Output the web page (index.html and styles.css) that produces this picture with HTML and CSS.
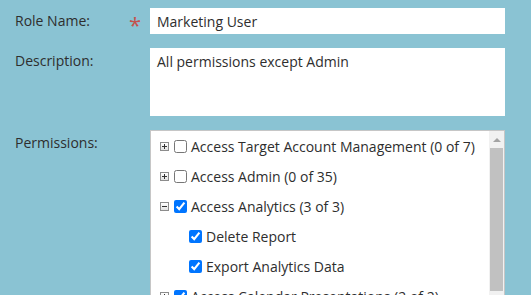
FILE: index.html
```html
<!DOCTYPE html>
<html lang="en">
<head>
    <meta charset="UTF-8">
    <meta name="viewport" content="width=device-width, initial-scale=1.0">
    <title>Role Settings</title>
    <link rel="stylesheet" href="styles.css">
</head>
<body>
    <div class="role-form">
        <!-- role name -->
        <label class="form-label" for="roleName">Role Name:<span class="required">*</span></label>
        <input class="text-input" type="text" id="roleName" value="Marketing User">

        <!-- description -->
        <label class="form-label" for="roleDesc">Description:</label>
        <textarea class="text-area" id="roleDesc">All permissions except Admin</textarea>

        <!-- permissions tree -->
        <label class="form-label">Permissions:</label>
        <div class="tree-box">
            <ul class="tree-list">
                <li class="tree-row">
                    <span class="expander plus"></span>
                    <input type="checkbox">
                    <span class="tree-text">Access Target Account Management (0 of 7)</span>
                </li>
                <li class="tree-row">
                    <span class="expander plus"></span>
                    <input type="checkbox">
                    <span class="tree-text">Access Admin (0 of 35)</span>
                </li>
                <li class="tree-row">
                    <span class="expander minus"></span>
                    <input type="checkbox" checked>
                    <span class="tree-text">Access Analytics (3 of 3)</span>
                </li>
                <li class="tree-row child">
                    <input type="checkbox" checked>
                    <span class="tree-text">Delete Report</span>
                </li>
                <li class="tree-row child">
                    <input type="checkbox" checked>
                    <span class="tree-text">Export Analytics Data</span>
                </li>
                <li class="tree-row">
                    <span class="expander plus"></span>
                    <input type="checkbox" checked>
                    <span class="tree-text">Access Calendar Presentations (2 of 2)</span>
                </li>
            </ul>
            <div class="scrollbar">
                <div class="scroll-arrow"></div>
                <div class="scroll-thumb"></div>
            </div>
        </div>
    </div>
</body>
</html>
```

FILE: styles.css
```css
html {
    overflow: hidden;
}

body {
    margin: 0;
    padding: 8px 0 0 15px;
    background-color: #8ac3d3;
    font-family: "Open Sans", "Liberation Sans", sans-serif;
    font-size: 14px;
    color: #2e2e2e;
}

.role-form {
    display: grid;
    grid-template-columns: 135px 355px;
    row-gap: 14px;
}

.form-label {
    display: flex;
    justify-content: space-between;
    align-items: flex-start;
    padding-top: 3px;
    line-height: 19px;
}

.required {
    color: #c4514c;
    font-size: 22px;
    line-height: 19px;
    padding-top: 4px;
    margin-right: 9px;
}

.text-input,
.text-area {
    border: none;
    margin: 0;
    background: white;
    font-family: inherit;
    font-size: 14px;
    color: #2e2e2e;
    line-height: 19px;
    outline: none;
}

.text-input {
    height: 26px;
    padding: 3px 7px;
    box-sizing: border-box;
}

.text-area {
    height: 68px;
    padding: 4px 7px;
    box-sizing: border-box;
    resize: none;
}

.tree-box {
    display: flex;
    height: 200px;
    background: white;
    border: 1px solid #c6c6c6;
}

.tree-list {
    flex: 1;
    list-style: none;
    margin: 0;
    padding: 0 0 0 9px;
}

.tree-row {
    display: flex;
    align-items: center;
    height: 30px;
}

.tree-row.child {
    padding-left: 29px;
}

.tree-row input {
    width: 13px;
    height: 13px;
    margin: 0 4px 0 0;
}

.expander {
    position: relative;
    width: 7px;
    height: 7px;
    margin-right: 5px;
    border: 1px solid #8c8c8c;
    background: linear-gradient(#ffffff, #e2e2e2);
}

.expander::before,
.expander::after {
    content: "";
    position: absolute;
    background: #333;
}

.expander::before {
    left: 1px;
    top: 3px;
    width: 5px;
    height: 1px;
}

.expander.plus::after {
    left: 3px;
    top: 1px;
    width: 1px;
    height: 5px;
}

.scrollbar {
    width: 15px;
    background: #f1f1f1;
    padding: 0 1px;
    box-sizing: border-box;
}

.scroll-arrow {
    height: 17px;
    display: flex;
    align-items: center;
    justify-content: center;
}

.scroll-arrow::before {
    content: "";
    border-left: 4px solid transparent;
    border-right: 4px solid transparent;
    border-bottom: 4px solid #a3a3a3;
}

.scroll-thumb {
    height: 143px;
    background: #c1c1c1;
}
```
